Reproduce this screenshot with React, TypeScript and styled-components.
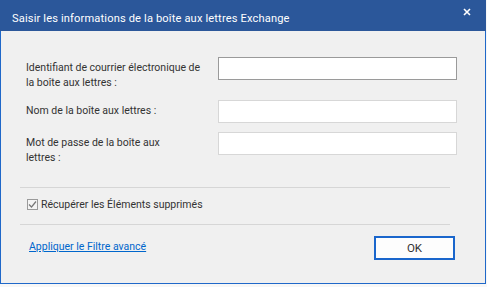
import styled, { createGlobalStyle } from 'styled-components';

const GlobalStyle = createGlobalStyle`
  html, body {
    margin: 0;
    padding: 0;
    background: #f7f7f7;
  }
  body {
    font-family: Roboto, 'Liberation Sans', Arial, sans-serif;
  }
`;

const StyledWindow = styled.div`
  width: 484px;
  height: 283px;
  border: 1px solid #1f68c9;
  border-top: none;
  background-color: #f0f0f0;
  display: flex;
  flex-direction: column;
`;

const StyledTitleBar = styled.div`
  height: 31px;
  margin: 0 -1px;
  background-color: #2b579a;
  color: #fff;
  display: flex;
  align-items: flex-start;
  justify-content: space-between;
  padding: 0 15px 0 12px;
  font-size: 11.1px;
`;

const StyledTitle = styled.span`
  padding-top: 12px;
  letter-spacing: 0.15px;
`;

const StyledClose = styled.svg`
  width: 8px;
  height: 8px;
  margin-top: 8px;
`;

const StyledBody = styled.div`
  padding: 26px 36px 0 19px;
  display: flex;
  flex-direction: column;
  font-size: 10.5px;
  color: #333;
`;

const StyledFieldRow = styled.div<{ $spacing: number }>`
  display: grid;
  grid-template-columns: 192px 239px;
  align-items: start;
  margin-top: ${({ $spacing }) => $spacing}px;
  padding-left: 6px;
`;

const StyledLabel = styled.label<{ $minHeight?: number }>`
  line-height: 15px;
  padding-top: 3px;
  min-height: ${({ $minHeight }) => $minHeight || 0}px;
  white-space: nowrap;
`;

const StyledInput = styled.input<{ $active?: boolean }>`
  box-sizing: border-box;
  width: 239px;
  height: 23px;
  border: 1px solid ${({ $active }) => ($active ? '#9a9a9a' : '#d7d7d7')};
  background: #fff;
  outline: none;
  padding: 0 4px;
`;

const StyledSeparator = styled.hr<{ $spacing: number }>`
  width: 430px;
  margin: ${({ $spacing }) => $spacing}px 0 0;
  border: none;
  border-top: 1px solid #d6d6d6;
`;

const StyledCheckRow = styled.label`
  display: flex;
  align-items: center;
  gap: 3px;
  height: 36px;
  padding-left: 7px;
  padding-bottom: 3px;
  box-sizing: border-box;
`;

const StyledCheckBox = styled.span`
  box-sizing: border-box;
  width: 11px;
  height: 11px;
  border: 1px solid #9a9a9a;
  background: #f4f4f4;
  display: flex;
  align-items: center;
  justify-content: center;
`;

const StyledFooter = styled.div`
  display: flex;
  align-items: flex-start;
  justify-content: space-between;
  padding: 11px 0 0 9px;
  width: 426px;
`;

const StyledLink = styled.a`
  color: #0066cc;
  text-decoration: underline;
  cursor: pointer;
  padding-top: 4px;
`;

const StyledButton = styled.button`
  box-sizing: border-box;
  width: 81px;
  height: 24px;
  border: 2px solid #1a66cc;
  background: #fdfdfd;
  font-family: Roboto, 'Liberation Sans', Arial, sans-serif;
  font-size: 11.5px;
  color: #333;
`;

const App = () => {
  return (
    <>
      <GlobalStyle />
      <StyledWindow>
        <StyledTitleBar>
          <StyledTitle>Saisir les informations de la boîte aux lettres Exchange</StyledTitle>
          <StyledClose viewBox="0 0 8 8">
            <path d="M1 1 L7 7 M7 1 L1 7" stroke="#fff" strokeWidth="1.6" />
          </StyledClose>
        </StyledTitleBar>

        <StyledBody>
          <StyledFieldRow $spacing={0}>
            <StyledLabel $minHeight={31}>
              Identifiant de courrier électronique de
              <br />
              la boîte aux lettres :
            </StyledLabel>
            <StyledInput $active type="text" />
          </StyledFieldRow>

          <StyledFieldRow $spacing={9}>
            <StyledLabel>Nom de la boîte aux lettres :</StyledLabel>
            <StyledInput type="text" />
          </StyledFieldRow>

          <StyledFieldRow $spacing={9}>
            <StyledLabel $minHeight={31}>
              Mot de passe de la boîte aux
              <br />
              lettres :
            </StyledLabel>
            <StyledInput type="password" />
          </StyledFieldRow>

          <StyledSeparator $spacing={21} />

          <StyledCheckRow>
            <StyledCheckBox>
              <svg width="9" height="9" viewBox="0 0 9 9">
                <path d="M1 4.5 L3.5 7 L8 1.5" fill="none" stroke="#777" strokeWidth="1.2" />
              </svg>
            </StyledCheckBox>
            Récupérer les Éléments supprimés
          </StyledCheckRow>

          <StyledSeparator $spacing={0} />

          <StyledFooter>
            <StyledLink>Appliquer le Filtre avancé</StyledLink>
            <StyledButton type="button">OK</StyledButton>
          </StyledFooter>
        </StyledBody>
      </StyledWindow>
    </>
  );
};

export default App;
